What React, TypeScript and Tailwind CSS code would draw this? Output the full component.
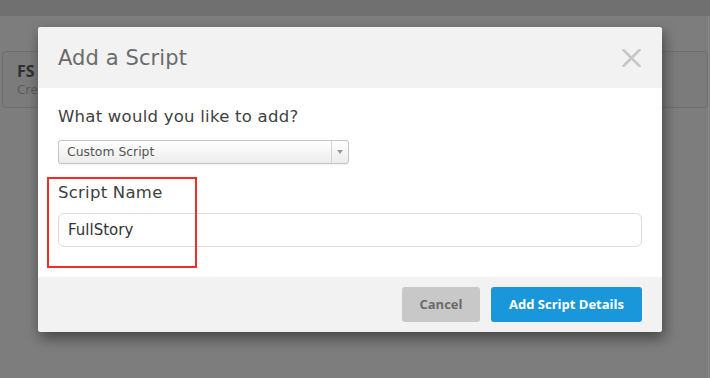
import React from "react";

export default function App() {
  const font = { fontFamily: '"Open Sans", "Liberation Sans", sans-serif' };
  const dv = { fontFamily: '"DejaVu Sans", "Open Sans", sans-serif' };
  return (
    <div className="relative w-[710px] h-[378px] overflow-hidden bg-[#7d7d7d]" style={font}>
      {/* background page */}
      <div className="h-[16px] bg-[#707070]" />
      <div className="flex pl-[2px] pr-[2px]">
        <div className="mt-[35px] h-[57px] flex-1 rounded-[4px] border border-[#6f6f6f] bg-[#7b7b7b] pl-[14px] pt-[9px]">
          <div className="text-[16px] leading-[20px] font-bold text-[#303030]">FS</div>
          <div className="text-[13px] leading-[16px] text-[#5a5a5a]">Create</div>
        </div>
      </div>
      <div className="absolute right-[1px] top-[16px] bottom-0 w-px bg-[#888888]" />

      {/* modal */}
      <div className="absolute left-[38px] top-[27px] w-[624px] rounded-[3px] bg-white shadow-[2px_6px_14px_rgba(0,0,0,0.45)]">
        <div className="flex h-[61px] items-center justify-between rounded-t-[3px] bg-[#f2f2f2] pl-[20px] pr-[20px]">
          <div className="text-[21px] leading-[26px] text-[#6b6b6b] tracking-[0.1px]" style={dv}>Add a Script</div>
          <svg width="19" height="18" viewBox="0 0 19 18" className="mr-[1px]">
            <path d="M1.5 1 L17.5 17 M17.5 1 L1.5 17" stroke="#c8c8c8" strokeWidth="2.6" strokeLinecap="round" />
          </svg>
        </div>
        <div className="relative h-[189px] pl-[20px] pr-[20px] pt-[18px]">
          <div className="text-[16.5px] leading-[22px] tracking-[0.25px] text-[#404040]" style={dv}>What would you like to add?</div>
          <div className="mt-[12px] flex h-[24px] w-[291px] items-stretch rounded-[3px] border border-[#c4c4c4] bg-gradient-to-b from-white to-[#ececec] shadow-[0_1px_1px_rgba(0,0,0,0.06)]">
            <div className="flex flex-1 items-center pl-[8px] text-[12.4px] text-[#555555]" style={dv}>Custom Script</div>
            <div className="flex w-[17px] items-center justify-center border-l border-[#d4d4d4]">
              <svg width="6" height="4" viewBox="0 0 6 4">
                <path d="M0 0 L6 0 L3 4 Z" fill="#9a9a9a" />
              </svg>
            </div>
          </div>
          <div className="mt-[18px] text-[16.5px] leading-[22px] tracking-[0.25px] text-[#404040]" style={dv}>Script Name</div>
          <div className="mt-[9px] flex h-[34px] w-[584px] items-center rounded-[6px] border border-[#dcdcdc] bg-white pl-[9px] text-[15px] text-[#333333]" style={dv}>
            FullStory
          </div>
          <div className="absolute left-[9px] top-[89px] h-[91px] w-[150px] border-2 border-[#f22b2b]" />
        </div>
        <div className="flex h-[55px] items-center justify-end gap-[11px] rounded-b-[3px] bg-[#f2f2f2] pr-[20px]">
          <div className="flex h-[35px] w-[78px] items-center justify-center rounded-[3px] bg-[#c8c8c8] text-[13px] font-bold text-[#6b6b6b]">
            Cancel
          </div>
          <div className="flex h-[35px] w-[151px] items-center justify-center rounded-[3px] bg-[#1a97db] text-[13px] font-bold text-white">
            Add Script Details
          </div>
        </div>
      </div>
    </div>
  );
}
